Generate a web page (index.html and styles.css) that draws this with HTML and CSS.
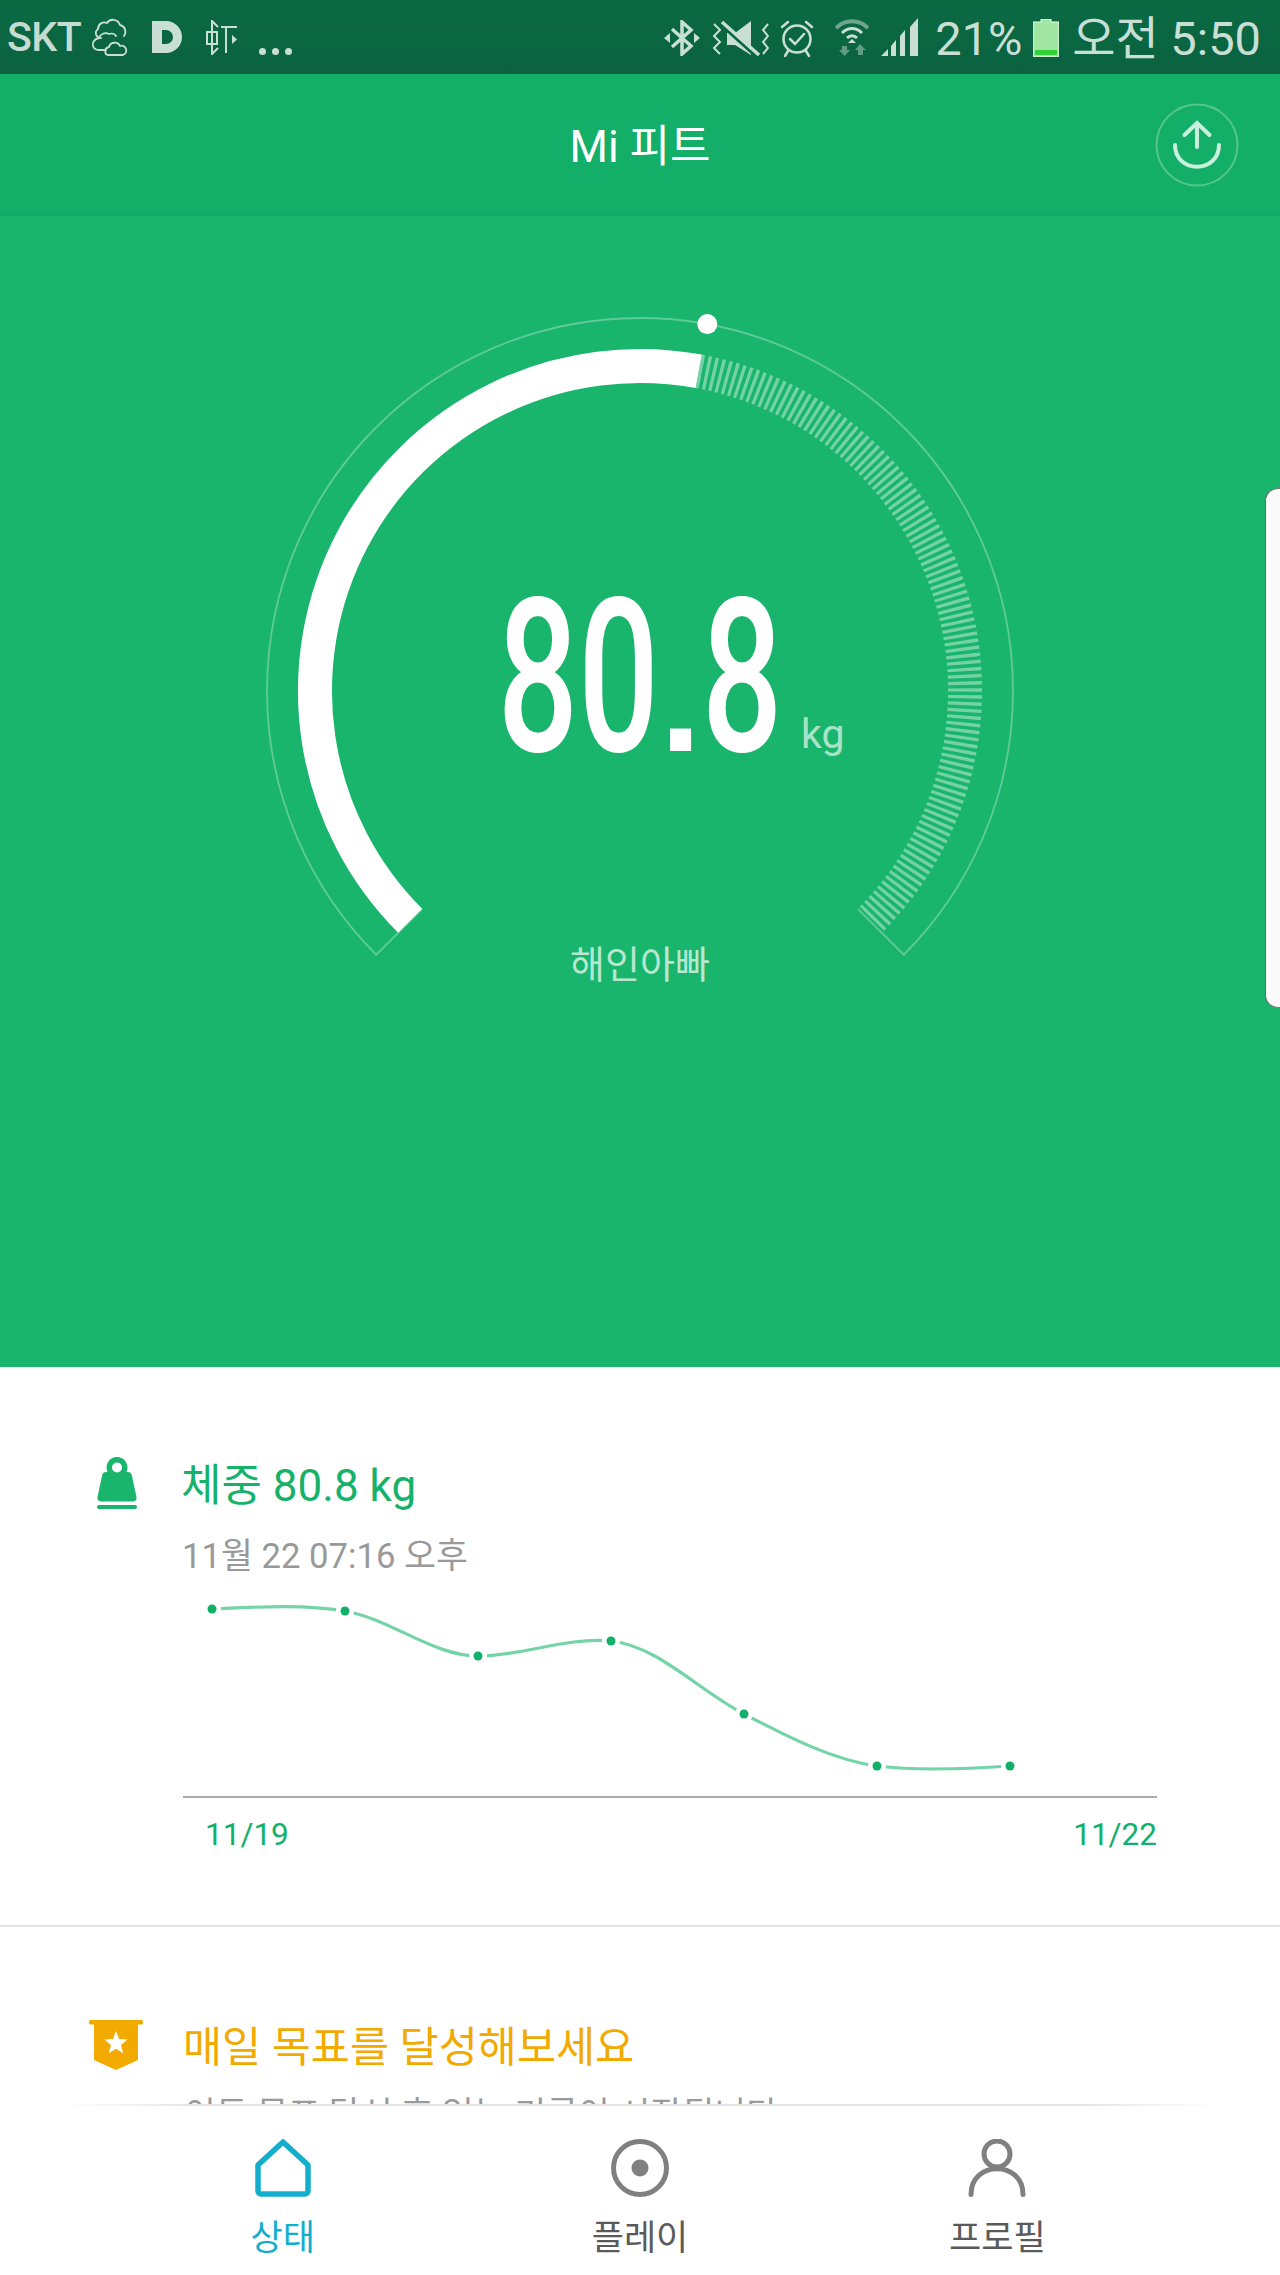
FILE: index.html
```html
<!DOCTYPE html>
<html lang="ko">
<head>
<meta charset="utf-8">
<title>Mi 피트</title>
<link rel="stylesheet" href="styles.css">
</head>
<body>
<div class="phone">
  <header class="statusbar">
    <div class="status-left">
      <span class="carrier">SKT</span>
      <svg class="ic-cloud" viewBox="0 0 40 40"><g class="st-line"><path d="M11 21c-5 0-7-6-3-9 0-5 5-8 9-6 3-5 11-4 13 2 5 1 7 7 4 11"/><path d="M9 21c-5 1-7 5-6 8 1 3 3 4 6 4h7"/><path d="M9 21c1-4 6-6 10-4 3-1 6 0 7 2"/><path d="M19 38c-5 0-5-7 0-8 1-5 9-6 11-1 6-2 9 7 3 9z"/></g></svg>
      <svg class="ic-d" viewBox="0 0 32 32"><path class="st-fill" fill-rule="evenodd" d="M0 0H14a16 16 0 0 1 0 32H0Z M10 9V23h4a7 7 0 0 0 0-14Z"/></svg>
      <svg class="ic-glyph" viewBox="0 0 33 35"><g class="st-thin"><path d="M7 0V35"/><path d="M2 12H12V24H2Z"/><path d="M7 1l6 6M7 34l6-6"/><path d="M16 7H32"/><path d="M21 7V33"/></g><path class="st-fill" d="M27 15l5 4.500-5 4.500Z"/></svg>
      <span class="dots"><i></i><i></i><i></i></span>
    </div>
    <div class="status-right">
      <svg class="ic-bt" viewBox="0 0 36 36"><g class="st-bold"><path d="M8 9L27 26 18 34V2L27 10 8 27"/></g><path class="st-fill" d="M0 18l6-5V23ZM36 18l-6-5V23Z"/></svg>
      <svg class="ic-mute" viewBox="0 0 56 38"><g class="st-thin"><path d="M1 5l6 6-6 6 6 6-6 6 6 6"/><path d="M55 5l-5 6 5 6-5 6 5 6-5 6"/></g><path class="st-fill" d="M14 14H22L38 2V36L22 26H14Z"/><path class="st-slash-bg" d="M8 6L46 40"/><path class="st-slash" d="M9 3L46 36"/></svg>
      <svg class="ic-alarm" viewBox="0 0 34 38"><g class="st-mid"><circle cx="17" cy="20" r="13.500"/><path d="M10 20l5 5 9-10"/><path d="M2 8l6-5M32 8l-6-5"/><path d="M8 32l-3 5M26 32l3 5"/></g></svg>
      <svg class="ic-wifi" viewBox="0 0 34 40"><g class="st-wifi"><path class="dim" d="M1 11C10 2 24 2 33 11"/><path d="M7 16C13 10 21 10 27 16"/><path d="M12 21C15 18 19 18 22 21"/></g><path class="st-fill" d="M17 22l4 4h-8Z"/><path class="dimfill" d="M7 29h5v4h3l-5.500 6-5.500-6h3ZM25 27l6 6h-3v5h-5v-5h-3Z"/></svg>
      <svg class="ic-signal" viewBox="0 0 38 38"><path class="st-fill" d="M0 38L7 31V38ZM10 28L15 22V38H10ZM19 18L24 12V38H19ZM29 9L37 0V38H29Z"/></svg>
      <span class="status-text pct">21%</span>
      <svg class="ic-batt" viewBox="0 0 26 38"><path class="batt-body" d="M8 0H18V3H26V38H0V3H8Z"/><path class="batt-low" d="M2 31H24V36H2Z"/></svg>
      <span class="status-text clock">오전 5:50</span>
    </div>
  </header>

  <div class="appbar">
    <h1 class="app-title">Mi 피트</h1>
    <button class="sync-btn" type="button" aria-label="sync">
      <svg viewBox="0 0 84 84"><circle class="sync-ring" cx="42" cy="42" r="40.500"/><g class="sync-arrow"><path d="M42 21V44"/><path d="M29.500 32L42 20 54.500 32"/><path d="M20 42C20 71 64 71 64 42"/></g></svg>
    </button>
  </div>

  <section class="hero">
    <div class="gauge">
      <svg class="gauge-svg" viewBox="0 0 760 660">
        <path class="g-frame" d="M162.200 598.800L116.250 644.750A373 373 0 1 1 643.750 644.750L597.800 598.800"/>
        <path class="g-ticks" d="M438.700 61.300A325 325 0 0 1 609.800 610.800"/>
        <path class="g-band" d="M150.200 610.800A325 325 0 0 1 438.700 61.300"/>
        <circle class="g-dot" cx="447.300" cy="14.100" r="10"/>
      </svg>
      <div class="reading">80<span class="point">.</span>8</div>
      <div class="unit">kg</div>
      <div class="owner">해인아빠</div>
    </div>
    <div class="side-tab"></div>
  </section>

  <main class="content">
    <article class="card card-weight">
      <svg class="ic-weight" viewBox="0 0 40 52"><path fill-rule="evenodd" d="M20 0a10.500 10.500 0 0 1 9.500 15h1c3 0 4 1.500 4.500 4L39.500 40c.5 3-1 4.500-4 4.500H4.500c-3 0-4.500-1.500-4-4.500L5 19c.5-2.500 1.500-4 4.500-4h1A10.500 10.500 0 0 1 20 0Zm0 5.500a5 5 0 1 0 0 10 5 5 0 0 0 0-10Z"/><rect x="0" y="48" width="40" height="4" rx="2"/></svg>
      <div class="card-body">
        <h2 class="card-title green">체중 80.8 kg</h2>
        <p class="card-sub">11월 22 07:16 오후</p>
        <div class="chart">
          <svg class="chart-svg" viewBox="0 0 974 206">
            <path class="c-line" d="M29 19C75 17 118 14 162 21C208 29 250 66 295 66C340 66 382 47 428 51C475 56 515 100 561 124C605 147 650 170 694 176C735 181 785 179 827 176"/>
            <g class="c-halo">
              <circle cx="29" cy="19" r="9"/><circle cx="162" cy="21" r="9"/><circle cx="295" cy="66" r="9"/><circle cx="428" cy="51" r="9"/><circle cx="561" cy="124" r="9"/><circle cx="694" cy="176" r="9"/><circle cx="827" cy="176" r="9"/>
            </g>
            <g class="c-dots">
              <circle cx="29" cy="19" r="4.500"/><circle cx="162" cy="21" r="4.500"/><circle cx="295" cy="66" r="4.500"/><circle cx="428" cy="51" r="4.500"/><circle cx="561" cy="124" r="4.500"/><circle cx="694" cy="176" r="4.500"/><circle cx="827" cy="176" r="4.500"/>
            </g>
          </svg>
          <div class="chart-labels"><span>11/19</span><span>11/22</span></div>
        </div>
      </div>
    </article>
    <article class="card card-goal">
      <svg class="ic-badge" viewBox="0 0 54 50"><rect x="0" y="0" width="54" height="4.500" rx="1.500"/><path d="M5 2H49V40L27 50 5 40Z"/><path class="star" d="M27 11L30.200 19 38.500 19.500 32 25 34.200 33.300 27 28.700 19.800 33.300 22 25 15.500 19.500 23.800 19Z"/></svg>
      <div class="card-body">
        <h2 class="card-title amber">매일 목표를 달성해보세요</h2>
        <p class="card-sub goal-sub">이동 목표 달성 후 얻는 기록이 시작됩니다</p>
      </div>
    </article>
  </main>

  <nav class="tabbar">
    <a class="tab active">
      <svg class="tab-icon" viewBox="0 0 58 58"><path class="home" d="M29 3L54 26V52a3 3 0 0 1-3 3H7a3 3 0 0 1-3-3V26Z"/></svg>
      <span>상태</span>
    </a>
    <a class="tab">
      <svg class="tab-icon" viewBox="0 0 58 58"><circle class="tab-stroke" cx="29" cy="29" r="26.500"/><circle class="tab-fill" cx="29" cy="29" r="8.500"/></svg>
      <span>플레이</span>
    </a>
    <a class="tab">
      <svg class="tab-icon" viewBox="0 0 58 58"><circle class="tab-stroke" cx="29" cy="15" r="13"/><path class="tab-stroke" d="M3 55.500C3 21 55 21 55 55.500"/></svg>
      <span>프로필</span>
    </a>
  </nav>
</div>
</body>
</html>
```

FILE: styles.css
```css
* { box-sizing: border-box; margin: 0; padding: 0; }
html, body { width: 1280px; height: 2275px; background: #fff; overflow: hidden; }
body { font-family: Roboto, "Noto Sans CJK KR", sans-serif; }
.phone { width: 1280px; height: 2275px; display: flex; flex-direction: column; position: relative; overflow: hidden; }

/* status bar */
.statusbar { height: 74px; flex: none; background: linear-gradient(#0a6a43, #0b6240); display: flex; justify-content: space-between; align-items: flex-start; padding: 0 19px 0 7px; color: #c9dfd6; }
.status-left, .status-right { display: flex; align-items: flex-start; height: 74px; }
.carrier { font-size: 41px; line-height: 48px; font-weight: 500; margin-top: 13px; width: 83px; letter-spacing: -.5px; color: #c5dcd2; }
.status-text { font-size: 47px; line-height: 50px; margin-top: 14px; }
.status-left svg, .status-right svg { display: block; flex: none; }
.ic-cloud { width: 40px; height: 40px; margin-top: 17px; }
.ic-d { width: 32px; height: 32px; margin: 21px 0 0 22px; }
.ic-glyph { width: 33px; height: 35px; margin: 20px 0 0 21px; }
.dots { display: flex; gap: 6px; margin: 48px 0 0 21px; }
.dots i { display: block; width: 7px; height: 7px; border-radius: 50%; background: #c9dfd6; }
.st-fill { fill: #c9dfd6; }
.st-line, .st-thin, .st-bold, .st-mid, .st-wifi { fill: none; stroke: #c9dfd6; }
.st-line { stroke-width: 1.800; stroke-linecap: round; }
.st-thin { stroke-width: 2; }
.st-bold { stroke-width: 3.500; }
.st-mid { stroke-width: 2.500; stroke-linecap: round; }
.st-wifi { stroke-width: 3; }
.st-wifi .dim { stroke: #6fa48e; stroke-width: 4; }
.dimfill { fill: #5f9c83; }
.st-slash { fill: none; stroke: #c9dfd6; stroke-width: 3.500; }
.st-slash-bg { fill: none; stroke: #0a6641; stroke-width: 3; }
.ic-bt { width: 36px; height: 36px; margin-top: 20px; }
.ic-mute { width: 56px; height: 38px; margin: 19px 0 0 13px; }
.ic-alarm { width: 34px; height: 38px; margin: 19px 0 0 11px; }
.ic-wifi { width: 34px; height: 40px; margin: 17px 0 0 21px; }
.ic-signal { width: 38px; height: 38px; margin: 18px 0 0 12px; }
.pct { margin-left: 16px; width: 88px; }
.ic-batt { width: 26px; height: 38px; margin: 19px 0 0 10px; }
.batt-body { fill: #a2e6a4; stroke: #f2fff3; stroke-width: 1; }
.batt-low { fill: #34d137; }
.clock { margin-left: 13px; }

/* app bar */
.appbar { height: 142px; flex: none; background: #13ae67; border-bottom: 2px solid #15a866; display: flex; align-items: center; justify-content: center; position: relative; }
.app-title { font-size: 44px; font-weight: 400; color: #fff; line-height: 60px; margin-top: 5px; }
.sync-btn { position: absolute; right: 41px; top: 29px; width: 84px; height: 84px; border: 0; background: none; }
.sync-btn svg { display: block; width: 84px; height: 84px; }
.sync-ring { fill: none; stroke: rgba(255,255,255,.28); stroke-width: 2; }
.sync-arrow { fill: none; stroke: #c9efdd; stroke-width: 4; stroke-linecap: round; }

/* hero */
.hero { height: 1151px; flex: none; background: #19b56c; position: relative; padding-top: 94px; }
.gauge { width: 760px; height: 660px; margin: 0 auto; position: relative; }
.gauge-svg { display: block; width: 760px; height: 660px; }
.g-frame { fill: none; stroke: rgba(255,255,255,.3); stroke-width: 1.800; }
.g-band { fill: none; stroke: #fff; stroke-width: 34; }
.g-ticks { fill: none; stroke: rgba(255,255,255,.4); stroke-width: 34; stroke-dasharray: 3.300 3.500; }
.g-dot { fill: #fff; }
.reading { position: absolute; left: 0; right: 0; top: 238px; text-align: center; font-size: 215px; line-height: 260px; font-weight: 500; color: #fff; transform: scaleX(.66); }
.point { display: inline-block; width: 65px; text-align: center; font-family: "Liberation Sans", sans-serif; font-size: 150px; font-weight: 700; transform: scaleX(1.5); }
.unit { position: absolute; left: 541px; top: 399px; font-size: 41px; line-height: 50px; color: rgba(255,255,255,.65); }
.owner { position: absolute; left: 0; right: 0; top: 630px; text-align: center; font-size: 38px; line-height: 50px; color: rgba(255,255,255,.7); }
.side-tab { position: absolute; right: 0; top: 272px; width: 15px; height: 520px; background: #fafafa; border-left: 1.500px solid #666; border-top: 1px solid #777; border-bottom: 1px solid #777; border-radius: 13px 0 0 13px; }

/* cards */
.content { flex: 1; min-height: 0; overflow: hidden; background: #fff; }
.card { display: grid; grid-template-columns: 183px 1fr; padding-right: 123px; }
.card-weight { height: 560px; padding-top: 90px; border-bottom: 2px solid #e3e3e3; }
.ic-weight { width: 40px; height: 52px; fill: #19b56c; margin-left: 97px; }
.card-title { font-size: 44px; line-height: 58px; font-weight: 400; margin-left: -2px; }
.green { color: #17b26a; }
.amber { color: #f2a900; font-size: 42.500px; }
.card-sub { font-size: 34.700px; line-height: 50px; color: #999; margin-top: 16px; margin-left: -1px; }
.chart { margin-top: 9px; }
.chart-svg { display: block; width: 974px; height: 208px; border-bottom: 2px solid #aaa; overflow: visible; }
.c-line { fill: none; stroke: #74d4a8; stroke-width: 3.200; }
.c-halo { fill: #fff; }
.c-dots { fill: #10b068; }
.chart-labels { display: flex; justify-content: space-between; padding-left: 22px; margin-top: 17px; font-size: 31.500px; line-height: 40px; color: #12b06a; }
.card-goal { padding-top: 93px; }
.ic-badge { width: 54px; height: 50px; fill: #f2a900; margin-left: 89px; }
.ic-badge .star { fill: #fff; }
.card-goal .card-body { padding-left: 2px; margin-top: -1px; }
.goal-sub { margin-top: 13px; white-space: nowrap; }

/* tab bar */
.tabbar { height: 171px; flex: none; background: #fff; padding: 0 104px; display: grid; grid-template-columns: repeat(3, 1fr); position: relative; }
.tabbar::before { content: ""; position: absolute; left: 60px; right: 60px; top: 0; height: 2px; background: linear-gradient(90deg, rgba(225,225,225,0), #e4e4e4 12%, #e4e4e4 88%, rgba(225,225,225,0)); }
.tab { display: flex; flex-direction: column; align-items: center; padding-top: 35px; font-size: 35px; line-height: 46px; color: #5a5a5a; }
.tab-icon { display: block; width: 58px; height: 58px; margin-bottom: 19px; }
.tab.active { color: #13aecb; }
.home { fill: none; stroke: #13aecb; stroke-width: 5.500; stroke-linejoin: round; }
.tab-stroke { fill: none; stroke: #808080; stroke-width: 5; stroke-linecap: round; }
.tab-fill { fill: #808080; }
```
